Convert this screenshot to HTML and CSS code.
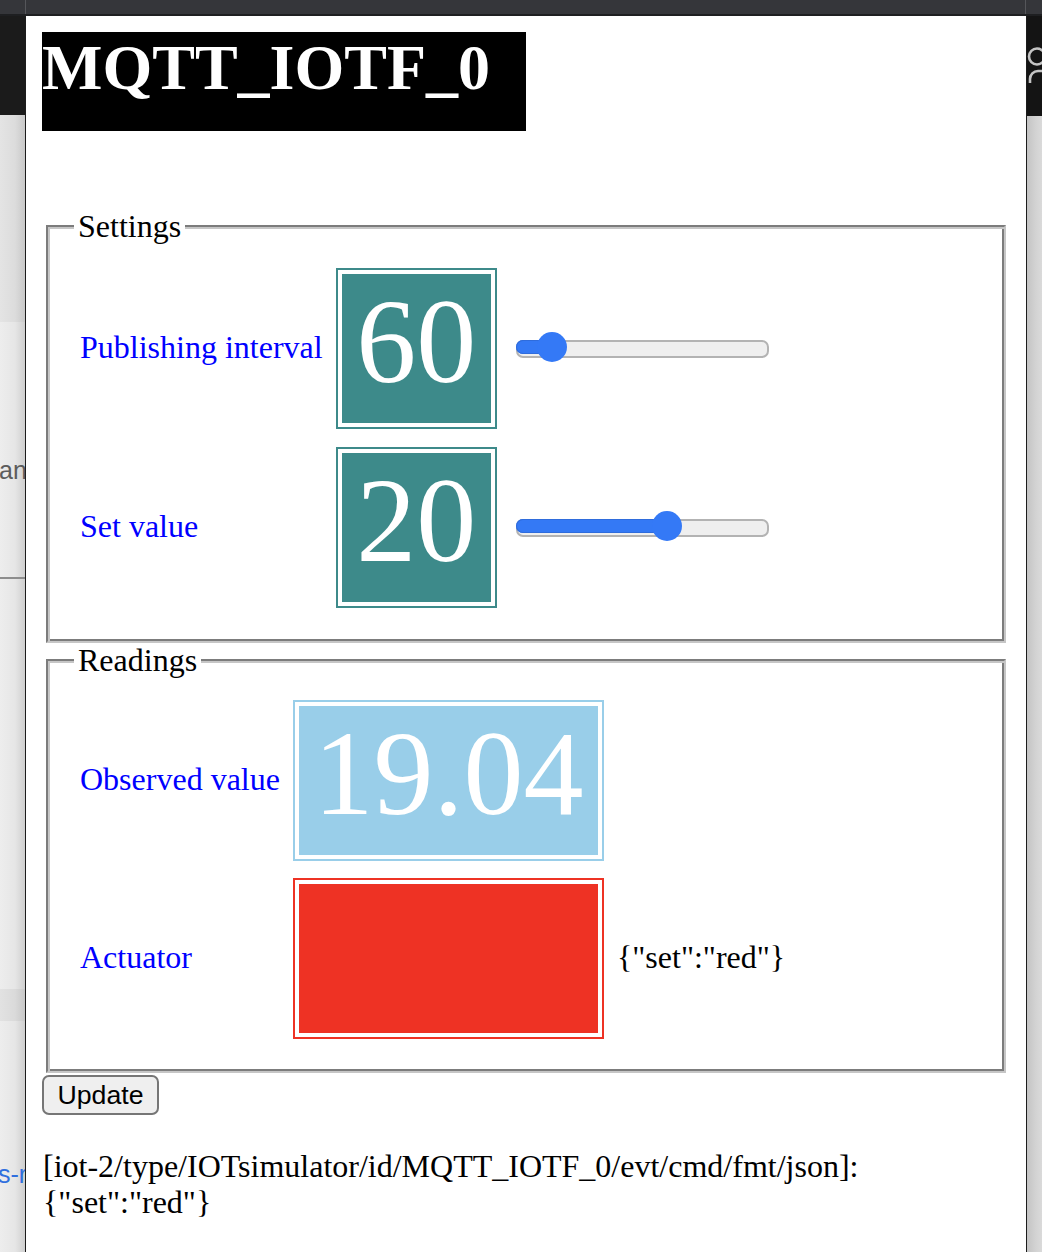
FILE: index.html
```html
<!DOCTYPE html>
<html lang="en">
<head>
<meta charset="utf-8">
<title>MQTT_IOTF_0</title>
<link rel="stylesheet" href="styles.css">
</head>
<body>
<div class="desktop">
  <div class="topbar"></div>

  <div class="backwin backwin-left">
    <div class="bw-header"></div>
    <div class="bw-panel"></div>
    <div class="bw-word">and</div>
    <div class="bw-rule"></div>
    <div class="bw-band"></div>
    <div class="bw-link">s-red</div>
  </div>

  <div class="backwin backwin-right">
    <div class="bw-header bw-header-right">
      <svg class="user-icon" width="15" height="100" viewBox="0 0 15 100" aria-hidden="true">
        <circle cx="10" cy="40.5" r="8" fill="none" stroke="#c4c4c4" stroke-width="2.6"/>
        <path d="M3 67 V63 A8 8 0 0 1 11 55 H20" fill="none" stroke="#c4c4c4" stroke-width="2.6"/>
      </svg>
    </div>
  </div>

  <div class="popup">
    <div class="title">MQTT_IOTF_0</div>

    <fieldset class="group group-settings">
      <legend>Settings</legend>
      <div class="rows">
        <span class="label">Publishing interval</span>
        <div class="num num-teal">60</div>
        <div class="slider" style="--p:0.094"><span class="fill"></span><span class="thumb"></span></div>

        <span class="label">Set value</span>
        <div class="num num-teal">20</div>
        <div class="slider" style="--p:0.61"><span class="fill"></span><span class="thumb"></span></div>
      </div>
    </fieldset>

    <fieldset class="group group-readings">
      <legend>Readings</legend>
      <div class="rows">
        <span class="label">Observed value</span>
        <div class="num num-wide num-sky">19.04</div>
        <span></span>

        <span class="label">Actuator</span>
        <div class="num num-wide num-red"></div>
        <span class="json">{"set":"red"}</span>
      </div>
    </fieldset>

    <button class="update" type="button">Update</button>

    <p class="log">[iot-2/type/IOTsimulator/id/MQTT_IOTF_0/evt/cmd/fmt/json]: {"set":"red"}</p>
  </div>
</div>
</body>
</html>
```

FILE: styles.css
```css
* {
  box-sizing: border-box;
}

html,
body {
  margin: 0;
  padding: 0;
}

body {
  width: 1042px;
  height: 1252px;
  overflow: hidden;
  background: #ececec;
  font-family: "Liberation Serif", "Times New Roman", serif;
}

.desktop {
  position: relative;
  width: 1042px;
  height: 1252px;
  overflow: hidden;
}

/* window title bar strip at the very top */
.topbar {
  position: absolute;
  top: 0;
  left: 0;
  right: 0;
  height: 16px;
  background: #35363a;
  border-bottom: 2px solid #1e1f21;
}

.topbar::before,
.topbar::after {
  content: "";
  position: absolute;
  top: 0;
  bottom: 0;
  width: 1px;
  background: #55565a;
}

.topbar::before {
  left: 25px;
}

.topbar::after {
  left: 1025px;
}

/* background windows peeking out at both sides */
.backwin {
  position: absolute;
  top: 16px;
  bottom: 0;
  overflow: hidden;
  display: flex;
  flex-direction: column;
}

.backwin-left {
  left: 0;
  width: 25px;
  background: linear-gradient(to right, #ededed 0%, #e6e6e6 60%, #cfcfcf 100%);
}

.backwin-right {
  left: 1027px;
  right: 0;
  background: linear-gradient(to right, #c4c4c4 0%, #d3d3d3 60%, #dadada 100%);
}

.bw-header {
  flex: none;
  height: 99px;
  background: #1b1b1b;
}

.bw-header-right {
  height: 100px;
  background: #141414;
}

.user-icon {
  display: block;
}

.bw-panel {
  flex: none;
  height: 207px;
  background: linear-gradient(to right, #e4e4e4 0%, #dcdcdc 60%, #c9c9c9 100%);
}

.bw-word {
  flex: none;
  margin-top: 132px;
  margin-left: -1px;
  font-family: "Liberation Sans", Arial, sans-serif;
  font-size: 25px;
  line-height: 32px;
  color: #5c5c5c;
  white-space: nowrap;
}

.bw-rule {
  flex: none;
  margin-top: 91px;
  height: 2px;
  background: #8d8d8d;
}

.bw-band {
  flex: none;
  margin-top: 410px;
  height: 32px;
  background: linear-gradient(to right, #e2e2e2 0%, #dadada 60%, #c8c8c8 100%);
}

.bw-link {
  flex: none;
  margin-top: 137px;
  margin-left: -2px;
  font-family: "Liberation Sans", Arial, sans-serif;
  font-size: 25px;
  line-height: 32px;
  color: #2f6fde;
  white-space: nowrap;
}

/* the popup window */
.popup {
  position: absolute;
  top: 16px;
  left: 25px;
  width: 1002px;
  bottom: 0;
  background: #ffffff;
  border-left: 1px solid #1c1c1c;
  border-right: 1px solid #1c1c1c;
  padding: 16px 16px 0 16px;
  color: #000000;
}

.title {
  width: 484px;
  height: 99px;
  margin: 0 0 77px 0;
  background: #000000;
  color: #ffffff;
  font-weight: bold;
  font-size: 64px;
  line-height: 71px;
  white-space: nowrap;
}

.group {
  margin: 0 4px;
  min-width: 0;
  padding: 0 24px 35px 26px;
  border: 2px solid;
  border-color: #7c7c7c #c6c6c6 #c6c6c6 #7c7c7c;
  box-shadow: inset 2px 2px 0 #c6c6c6, inset -2px -2px 0 #7c7c7c;
}

.group-readings {
  margin-top: -1px;
  padding-bottom: 34px;
}

.group legend {
  padding: 0 4px;
  background: linear-gradient(to bottom, transparent 0, transparent 17px, #ffffff 17px, #ffffff 24px, transparent 24px);
  font-size: 32px;
  line-height: 36px;
}

.rows {
  display: grid;
  grid-template-columns: max-content max-content max-content;
  column-gap: 15px;
  row-gap: 22px;
  align-items: center;
  padding: 26px 0 0 6px;
}

.group-readings .rows {
  padding-top: 24px;
  row-gap: 21px;
}

.label {
  font-size: 32px;
  line-height: 36px;
  padding-bottom: 4px;
  color: #0000ff;
  white-space: nowrap;
}

.num {
  width: 157px;
  height: 157px;
  border: 4px solid #ffffff;
  padding-top: 1px;
  font-size: 120px;
  line-height: 133px;
  text-align: center;
  color: #ffffff;
  white-space: nowrap;
}

.num-wide {
  width: 307px;
}

.num-teal {
  background: #3d8a8a;
  box-shadow: 0 0 0 2px #3d8a8a;
}

.num-sky {
  background: #99cee9;
  box-shadow: 0 0 0 2px #99cee9;
}

.num-red {
  background: #ee3224;
  box-shadow: 0 0 0 2px #ee3224;
}

.json {
  font-size: 32px;
  line-height: 36px;
  padding-bottom: 4px;
  white-space: nowrap;
}

/* range slider */
.slider {
  position: relative;
  width: 253px;
  height: 30px;
  margin-left: 6px;
  margin-bottom: 4px;
}

.slider::before {
  content: "";
  position: absolute;
  left: 0;
  right: 0;
  top: 8px;
  height: 14px;
  border-radius: 7px;
  background: #efefef;
  border: 2px solid #b3b3b3;
}

.slider .fill {
  position: absolute;
  left: 0;
  top: 8px;
  height: 14px;
  width: calc(15px + var(--p) * 223px);
  border-radius: 7px;
  background: #3479f5;
  box-shadow: inset 0 0 0 1px #2f6cdc;
}

.slider .thumb {
  position: absolute;
  top: 0;
  left: calc(var(--p) * 223px);
  width: 30px;
  height: 30px;
  border-radius: 50%;
  background: #3479f6;
}

.update {
  display: block;
  margin: 2px 0 0 0;
  width: 117px;
  height: 40px;
  padding: 0;
  background: #efefef;
  border: 2px solid #767676;
  border-radius: 7px;
  color: #000000;
  font-family: "Liberation Sans", Arial, sans-serif;
  font-size: 26.7px;
  line-height: 32px;
}

.log {
  margin: 33px 0 0 1px;
  font-size: 32px;
  line-height: 36px;
}
```
